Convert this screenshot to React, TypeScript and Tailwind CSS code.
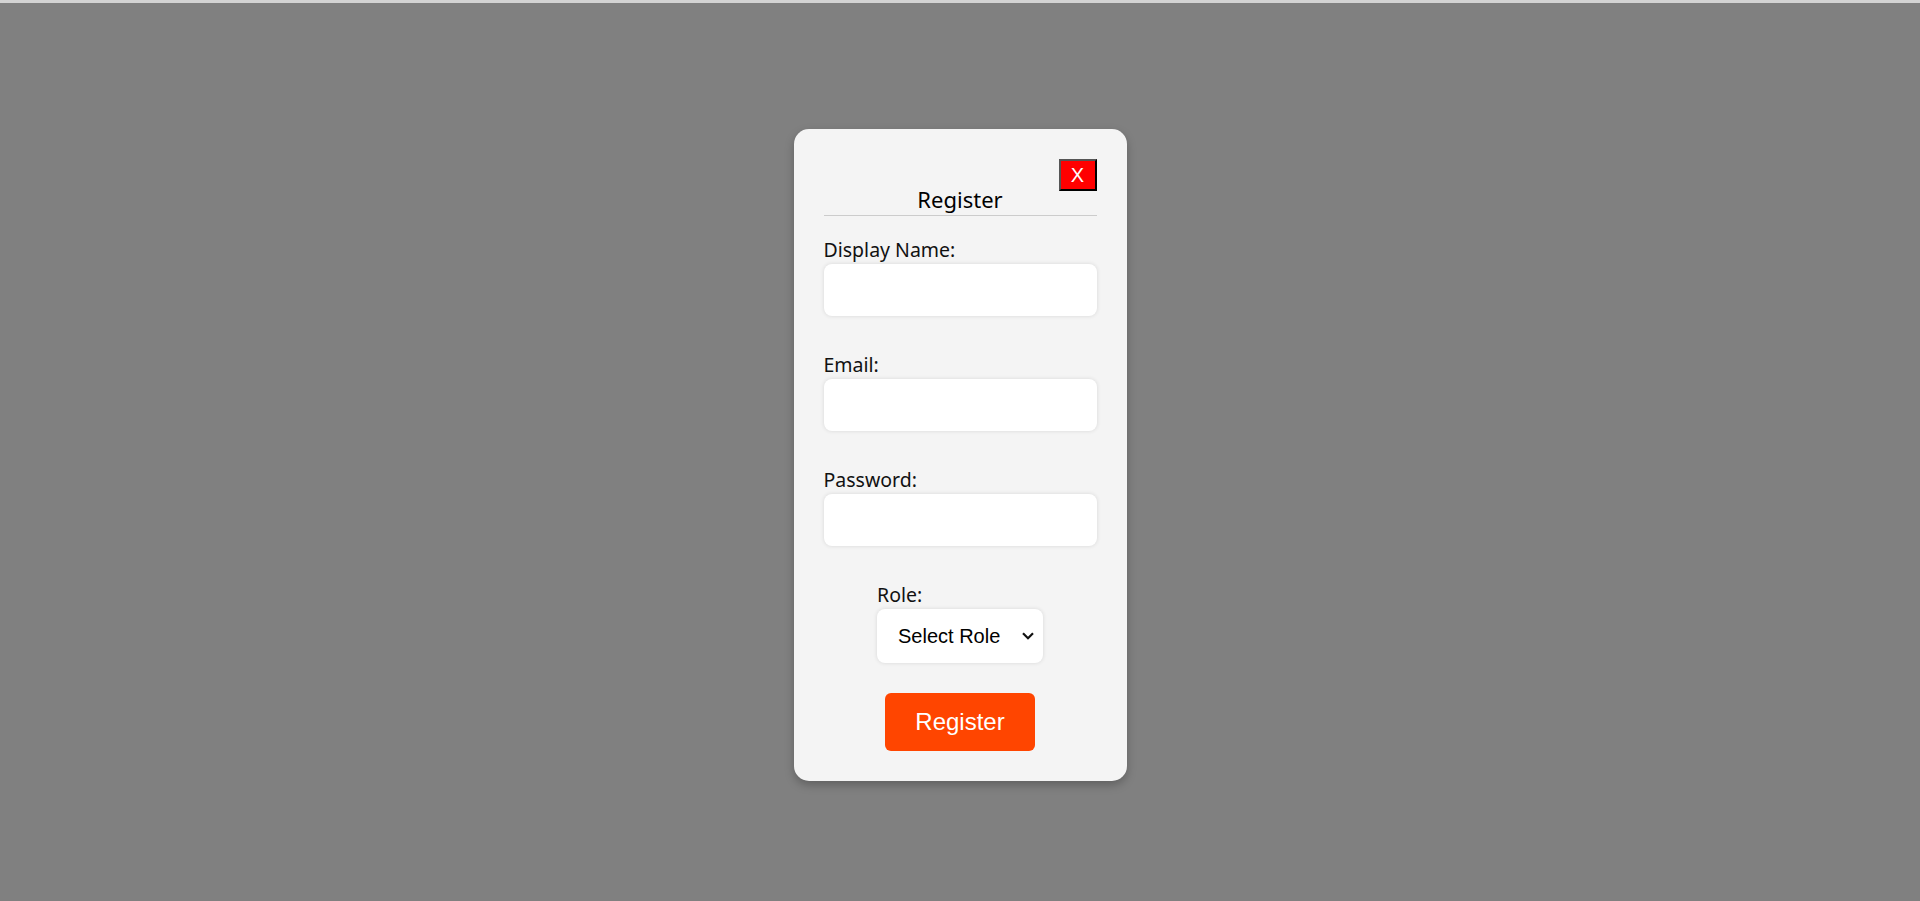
import React from "react";

const fields = [
  { label: "Display Name:", type: "text" },
  { label: "Email:", type: "email" },
  { label: "Password:", type: "password" },
];

const RegisterModal: React.FC = () => {
  return (
    <div className="w-[333px] rounded-[15px] bg-[#f4f4f4] px-[30px] pt-[30px] pb-[30px] shadow-[0_4px_10px_rgba(0,0,0,0.25)]">
      <div className="flex justify-end">
        <button
          className="h-[32px] w-[38px] bg-[#ff0000] text-[20px] leading-none text-white border-2 border-t-[#555] border-l-[#555] border-b-black border-r-black"
          style={{ fontFamily: "'Liberation Sans', Arial, sans-serif" }}>
          X
        </button>
      </div>

      <h2 className="border-b border-[#cccccc] pb-[7px] text-center text-[22px] leading-[17px] text-black">
        Register
      </h2>

      <form className="mt-[25px]">
        {fields.map((f) => (
          <div key={f.label} className="mb-[40px]">
            <label className="mb-[5px] block text-[19.5px] leading-[18px] text-[#111]">
              {f.label}
            </label>
            <input
              type={f.type}
              className="block h-[52px] w-full rounded-[8px] bg-white px-3 shadow-[0_0_4px_rgba(0,0,0,0.12)] outline-none"
            />
          </div>
        ))}

        <div className="flex justify-center">
          <div className="w-[166px]">
            <label className="mb-[5px] block text-[19.5px] leading-[18px] text-[#111]">
              Role:
            </label>
            <div className="relative">
              <select
                className="block h-[54px] w-full appearance-none rounded-[8px] bg-white pl-[21px] text-[20px] text-black shadow-[0_0_4px_rgba(0,0,0,0.12)] outline-none"
                style={{ fontFamily: "'Liberation Sans', Arial, sans-serif" }}
                defaultValue="">
                <option value="">Select Role</option>
                <option value="user">User</option>
                <option value="admin">Admin</option>
              </select>
              <svg
                className="pointer-events-none absolute right-[9px] top-[23px]"
                width="12"
                height="8"
                viewBox="0 0 12 8"
                fill="none">
                <path d="M1 1.2 L6 6.2 L11 1.2" stroke="#111" strokeWidth="2.2" />
              </svg>
            </div>
          </div>
        </div>

        <div className="mt-[30px] flex justify-center">
          <button
            type="button"
            className="h-[58px] w-[150px] rounded-[6px] bg-[#ff4500] text-[24px] text-white"
            style={{ fontFamily: "'Liberation Sans', Arial, sans-serif" }}>
            Register
          </button>
        </div>
      </form>
    </div>
  );
};

export default function App() {
  return (
    <div
      className="flex h-[901px] w-full flex-col bg-[#808080]"
      style={{ fontFamily: "'Noto Sans', sans-serif" }}>
      <div className="h-[3px] w-full bg-[#d3d3d3]" />
      <div className="flex flex-1 items-center justify-center pt-[5px]">
        <RegisterModal />
      </div>
    </div>
  );
}
